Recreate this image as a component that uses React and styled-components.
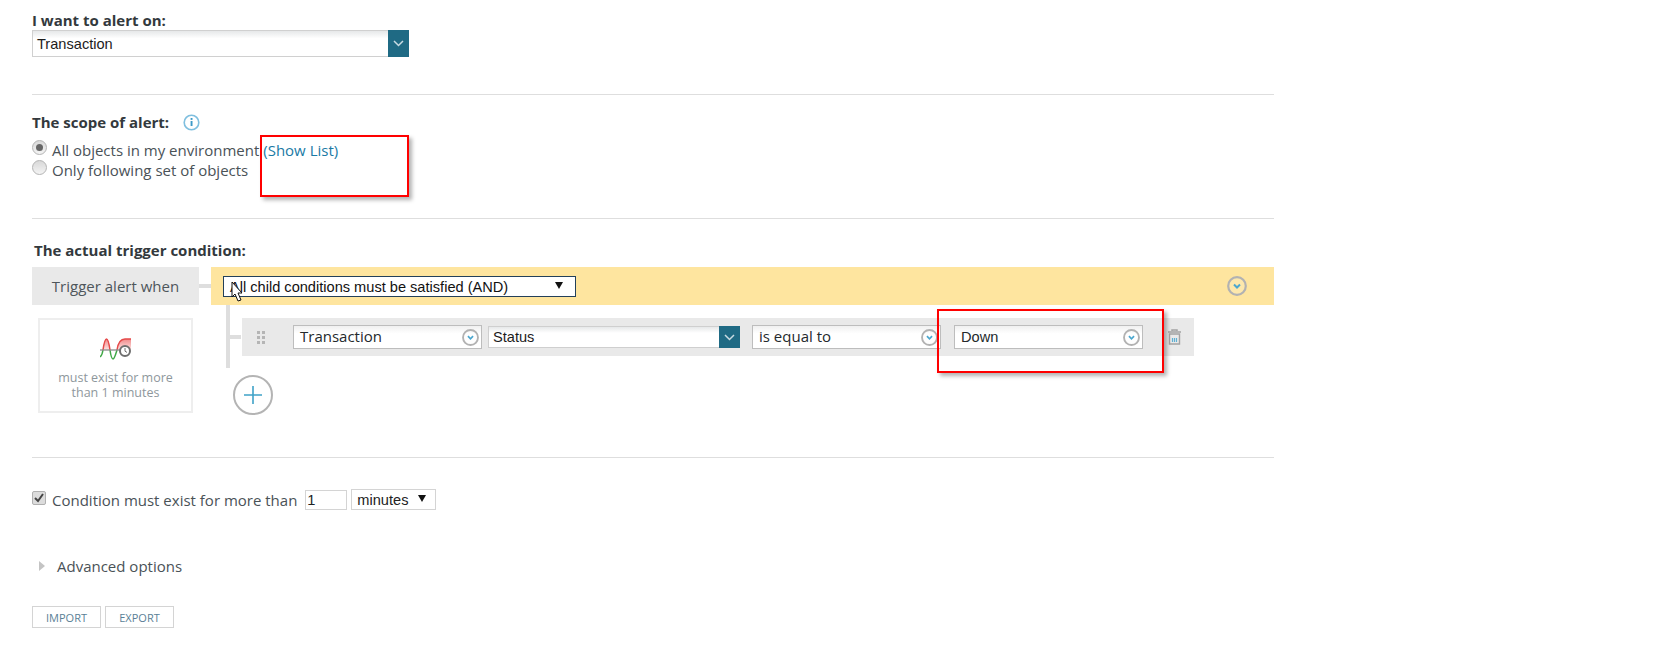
import React from 'react';
import styled, { createGlobalStyle } from 'styled-components';

const GlobalStyle = createGlobalStyle`
  html, body {
    margin: 0;
    padding: 0;
    background: #fff;
  }
  body {
    font-family: "Open Sans", "Noto Sans", sans-serif;
    font-size: 15px;
    color: #3c4347;
    overflow: hidden;
  }
`;

const Page = styled.div`
  position: relative;
  width: 1678px;
  height: 667px;
  box-sizing: border-box;
  padding: 12px 0 0 32px;
`;

const Form = styled.div`
  width: 1242px;
`;

const Section = styled.section`
  height: ${(p) => p.$height}px;
  padding-top: ${(p) => p.$top || 0}px;
  box-sizing: border-box;
  border-bottom: 1px solid #dedede;
`;

const Heading = styled.div`
  font-weight: 700;
  font-size: 15px;
  line-height: 17px;
  color: #33393d;
  display: flex;
  align-items: center;
  gap: 14px;
  margin-left: ${(p) => p.$indent || 0}px;
`;

const WideSelect = styled.div`
  width: 377px;
  height: 27px;
  margin-top: 1px;
  display: flex;
  box-sizing: border-box;
`;

const SelectBody = styled.div`
  flex: 1;
  box-sizing: border-box;
  border: 1px solid #d0d0d0;
  border-right: none;
  background: linear-gradient(#e6e8e9, #fff 30%);
  font-family: "Liberation Sans", Arial, sans-serif;
  font-size: 14.6px;
  line-height: 27px;
  color: #1c1c1c;
  padding-left: 4px;
`;

const ChevronTile = styled.div`
  width: 21px;
  background: #1f6a84;
  display: flex;
  align-items: center;
  justify-content: center;
`;

const ScopeBlock = styled.div`
  margin-top: 9px;
  display: flex;
  flex-direction: column;
`;

const OptionRow = styled.label`
  display: flex;
  align-items: center;
  gap: 5px;
  height: 20px;
  line-height: 20px;
  color: #4a5257;
`;

const Radio = styled.span`
  width: 15px;
  height: 15px;
  margin-top: -6px;
  box-sizing: border-box;
  border-radius: 50%;
  border: 1px solid #b4b4b4;
  background: linear-gradient(#d8d8d8, #f4f4f4);
  display: flex;
  align-items: center;
  justify-content: center;
  &::after {
    content: '';
    width: 7px;
    height: 7px;
    border-radius: 50%;
    background: ${(p) => (p.$checked ? '#666' : 'transparent')};
  }
`;

const LinkText = styled.span`
  color: #1a7aa5;
  margin-left: 4px;
`;

const TriggerGrid = styled.div`
  display: grid;
  grid-template-columns: 167px 12px 1fr;
  margin-top: 8px;
`;

const WhenTile = styled.div`
  height: 38px;
  background: #e9e9e9;
  display: flex;
  align-items: center;
  justify-content: center;
  color: #4e565b;
`;

const Connector = styled.div`
  height: 4px;
  background: #dedede;
  align-self: center;
`;

const YellowBar = styled.div`
  height: 38px;
  background: #fee59f;
  display: flex;
  align-items: center;
  justify-content: space-between;
  padding: 0 27px 0 12px;
`;

const AndSelect = styled.div`
  width: 353px;
  height: 21px;
  margin-top: 1px;
  box-sizing: border-box;
  border: 1px solid #23405a;
  background: #fff;
  font-family: "Liberation Sans", Arial, sans-serif;
  font-size: 14.6px;
  line-height: 21px;
  color: #111;
  padding-left: 6px;
  position: relative;
`;

const CaretDown = styled.span`
  position: absolute;
  top: 5px;
  right: ${(p) => p.$right || 12}px;
  width: 0;
  height: 0;
  border-left: 4px solid transparent;
  border-right: 4px solid transparent;
  border-top: 7px solid #111;
`;

const Pointer = styled.svg`
  position: absolute;
  left: 7px;
  top: 4px;
`;

const ExistsCard = styled.div`
  margin: 13px 0 0 6px;
  width: 155px;
  height: 95px;
  box-sizing: border-box;
  border: 2px solid #eeeeee;
  display: flex;
  flex-direction: column;
  align-items: center;
  padding-top: 18px;
  font-size: 12.5px;
  line-height: 15px;
  text-align: center;
  color: #8e979c;
  p {
    margin: 9px 0 0;
  }
`;

const ConditionTree = styled.div`
  grid-column: 3;
  padding-left: 15px;
`;

const TreeLines = styled.div`
  width: 968px;
  height: 50px;
  border-left: 4px solid #dedede;
  display: flex;
  align-items: flex-start;
  padding-top: 13px;
`;

const RowStub = styled.div`
  width: 11px;
  height: 4px;
  margin-top: 17px;
  flex: none;
  background: #dedede;
`;

const ConditionRow = styled.div`
  width: 952px;
  height: 38px;
  flex: none;
  margin-left: 1px;
  background: #e9e9e9;
  display: flex;
  align-items: center;
  padding-left: 15px;
  box-sizing: border-box;
`;

const Grip = styled.div`
  width: 8px;
  display: grid;
  grid-template-columns: 3px 3px;
  gap: 2px;
  margin-right: 28px;
  i {
    width: 3px;
    height: 3px;
    background: #b5b5b5;
  }
`;

const FieldSelect = styled.div`
  width: ${(p) => p.$width}px;
  height: 24px;
  margin-right: ${(p) => p.$gap || 0}px;
  flex: none;
  box-sizing: border-box;
  border: 1px solid #bdbdbd;
  background: linear-gradient(#f0f0f0, #fff 35%);
  display: flex;
  align-items: center;
  justify-content: space-between;
  padding: 0 2px 0 6px;
  font-family: ${(p) => (p.$sans ? '"Liberation Sans", Arial, sans-serif' : '"Open Sans", sans-serif')};
  font-size: ${(p) => (p.$sans ? 14.6 : 15)}px;
  color: #24292c;
`;

const FieldText = styled.span`
  margin-top: -2px;
`;

const StatusSelect = styled.div`
  width: 252px;
  height: 22px;
  margin-right: 12px;
  flex: none;
  display: flex;
`;

const StatusBody = styled(SelectBody)`
  line-height: 20px;
  border-color: #cfcfcf;
`;

const AddButton = styled.div`
  width: 36px;
  height: 36px;
  margin: 7px 0 0 7px;
  border: 2px solid #b4b4b4;
  border-radius: 50%;
  background: #fff;
  display: flex;
  align-items: center;
  justify-content: center;
`;

const DurationRow = styled.div`
  display: flex;
  align-items: center;
  margin-top: 31px;
  height: 21px;
  color: #4a5257;
`;

const CheckBox = styled.span`
  width: 14px;
  height: 14px;
  margin: -3px 6px 0 0;
  box-sizing: border-box;
  border: 1px solid #b0b0b0;
  border-radius: 2px;
  background: #dcdcdc;
  display: flex;
  align-items: center;
  justify-content: center;
`;

const NumberBox = styled.div`
  width: 42px;
  height: 20px;
  margin-left: 8px;
  box-sizing: border-box;
  border: 1px solid #d4d4d4;
  font-family: "Liberation Sans", Arial, sans-serif;
  font-size: 14.6px;
  line-height: 18px;
  padding-left: 1px;
  color: #222;
`;

const UnitSelect = styled.div`
  position: relative;
  width: 85px;
  height: 21px;
  margin-left: 4px;
  box-sizing: border-box;
  border: 1px solid #d4d4d4;
  font-family: "Liberation Sans", Arial, sans-serif;
  font-size: 14.6px;
  line-height: 20px;
  padding-left: 5px;
  color: #222;
`;

const AdvancedRow = styled.div`
  display: flex;
  align-items: center;
  margin-top: 46px;
  height: 20px;
  color: #4a5257;
  padding-left: 7px;
  gap: 12px;
`;

const Triangle = styled.span`
  width: 0;
  height: 0;
  border-top: 5px solid transparent;
  border-bottom: 5px solid transparent;
  border-left: 6px solid #c4c4c4;
`;

const ButtonRow = styled.div`
  display: flex;
  gap: 4px;
  margin-top: 30px;
`;

const PlainButton = styled.button`
  width: 69px;
  height: 22px;
  padding: 0;
  box-sizing: border-box;
  border: 1px solid #d4d4d4;
  background: #fff;
  font-family: "Open Sans", sans-serif;
  font-size: 11px;
  color: #5a7f96;
`;

const RedBox = styled.div`
  position: absolute;
  left: ${(p) => p.$left}px;
  top: ${(p) => p.$top}px;
  width: ${(p) => p.$width}px;
  height: ${(p) => p.$height}px;
  box-sizing: border-box;
  border: 2px solid #ff0000;
  box-shadow: 3px 3px 4px rgba(0, 0, 0, 0.3);
`;

const TileChevron = () => (
  <svg width="11" height="7" viewBox="0 0 11 7" fill="none">
    <path d="M1 1l4.5 4.5L10 1" stroke="#c9dbe2" strokeWidth="1.5" />
  </svg>
);

const RoundChevron = ({ size = 17 }) => (
  <svg width={size} height={size} viewBox="0 0 20 20" fill="none" style={{ flex: 'none' }}>
    <circle cx="10" cy="10" r="8.8" fill="#fafafa" fillOpacity="0.15" stroke="#b2b2b2" strokeWidth="2.2" />
    <path d="M7 8.5l3 3 3-3" stroke="#4aa7cf" strokeWidth="2" />
  </svg>
);

const InfoIcon = () => (
  <svg width="17" height="17" viewBox="0 0 17 17" fill="none">
    <circle cx="8.5" cy="8.5" r="7.3" stroke="#7fbfdf" strokeWidth="1.6" />
    <rect x="7.6" y="7" width="1.9" height="5" fill="#3d9ac8" />
    <rect x="7.6" y="4" width="1.9" height="1.9" fill="#3d9ac8" />
  </svg>
);

const TrendIcon = () => (
  <svg width="31" height="23" viewBox="0 0 31 23" fill="none">
    <defs>
      <linearGradient id="redFade" x1="0" y1="0" x2="0" y2="1">
        <stop offset="0" stopColor="#f08a8a" />
        <stop offset="1" stopColor="#fde4e4" />
      </linearGradient>
    </defs>
    <path d="M3 12C4 5 5 1 6.5 1S9 5 10 12z" fill="url(#redFade)" />
    <path d="M17 12c1-7 3-11 8-11h6v11z" fill="url(#redFade)" />
    <path d="M3 12C4 5 5 1 6.5 1S9 5 10 12M17 12c1-7 3-11 8-11h6" stroke="#e54a4a" strokeWidth="1.5" />
    <path d="M0 19c1.5-1 2.5-4 3-7M10 12c.7 5 1.5 9 3 9s2.5-4 4-9" stroke="#3fa846" strokeWidth="1.5" />
    <path d="M0 12h22" stroke="#8c8c8c" strokeWidth="1.3" />
    <circle cx="25" cy="13" r="5" fill="#fff" stroke="#6e6e6e" strokeWidth="2" />
    <path d="M25 10v3.2l2 1.2" stroke="#6e6e6e" strokeWidth="1" />
  </svg>
);

const TrashIcon = () => (
  <svg width="15" height="16" viewBox="0 0 15 16" fill="none" style={{ marginLeft: 24, flex: 'none' }}>
    <path d="M5 2V1h5v1M1 3h13" stroke="#a3a3a3" strokeWidth="1.5" />
    <path d="M2.5 5h10v10h-10z" stroke="#a3a3a3" strokeWidth="1.4" />
    <path d="M5.5 9v4M7.5 9v4M9.5 9v4" stroke="#5fb0d3" strokeWidth="1.2" />
  </svg>
);

const PlusIcon = () => (
  <svg width="18" height="18" viewBox="0 0 18 18">
    <path d="M9 0v18M0 9h18" stroke="#3fa2c8" strokeWidth="1.6" />
  </svg>
);

const CheckMark = () => (
  <svg width="10" height="10" viewBox="0 0 10 10" fill="none">
    <path d="M1 5l3 3 5-7" stroke="#444" strokeWidth="2" />
  </svg>
);

const GripDots = () => (
  <Grip>
    {[0, 1, 2, 3, 4, 5].map((n) => (
      <i key={n} />
    ))}
  </Grip>
);

const App = () => {
  return (
    <Page>
      <GlobalStyle />
      <Form>
        <Section $height={83}>
          <Heading>I want to alert on:</Heading>
          <WideSelect>
            <SelectBody>Transaction</SelectBody>
            <ChevronTile>
              <TileChevron />
            </ChevronTile>
          </WideSelect>
        </Section>

        <Section $height={124} $top={19}>
          <Heading>
            The scope of alert:
            <InfoIcon />
          </Heading>
          <ScopeBlock>
            <OptionRow>
              <Radio $checked />
              <span>
                All objects in my environment
                <LinkText>(Show List)</LinkText>
              </span>
            </OptionRow>
            <OptionRow>
              <Radio />
              <span>Only following set of objects</span>
            </OptionRow>
          </ScopeBlock>
        </Section>

        <Section $height={239} $top={23}>
          <Heading $indent={2}>The actual trigger condition:</Heading>
          <TriggerGrid>
            <WhenTile>Trigger alert when</WhenTile>
            <Connector />
            <YellowBar>
              <AndSelect>
                All child conditions must be satisfied (AND)
                <CaretDown />
                <Pointer width="12" height="22" viewBox="0 0 12 22">
                  <path d="M1 1v15l3-3 3 7 3-1-3-7h4z" fill="#fff" stroke="#111" strokeWidth="1" />
                </Pointer>
              </AndSelect>
              <RoundChevron size={20} />
            </YellowBar>
            <ExistsCard>
              <TrendIcon />
              <p>must exist for more<br />than 1 minutes</p>
            </ExistsCard>
            <div />
            <ConditionTree>
              <TreeLines>
                <RowStub />
                <ConditionRow>
                  <GripDots />
                  <FieldSelect $width={189} $gap={6}>
                    <FieldText>Transaction</FieldText>
                    <RoundChevron />
                  </FieldSelect>
                  <StatusSelect>
                    <StatusBody>Status</StatusBody>
                    <ChevronTile>
                      <TileChevron />
                    </ChevronTile>
                  </StatusSelect>
                  <FieldSelect $width={189} $gap={13}>
                    <FieldText>is equal to</FieldText>
                    <RoundChevron />
                  </FieldSelect>
                  <FieldSelect $width={189} $sans>
                    Down
                    <RoundChevron />
                  </FieldSelect>
                  <TrashIcon />
                </ConditionRow>
              </TreeLines>
              <AddButton>
                <PlusIcon />
              </AddButton>
            </ConditionTree>
          </TriggerGrid>
        </Section>

        <DurationRow>
          <CheckBox>
            <CheckMark />
          </CheckBox>
          Condition must exist for more than
          <NumberBox>1</NumberBox>
          <UnitSelect>
            minutes
            <CaretDown $right={9} />
          </UnitSelect>
        </DurationRow>

        <AdvancedRow>
          <Triangle />
          Advanced options
        </AdvancedRow>

        <ButtonRow>
          <PlainButton>IMPORT</PlainButton>
          <PlainButton>EXPORT</PlainButton>
        </ButtonRow>
      </Form>

      <RedBox $left={260} $top={135} $width={149} $height={62} />
      <RedBox $left={937} $top={309} $width={227} $height={64} />
    </Page>
  );
};

export default App;
